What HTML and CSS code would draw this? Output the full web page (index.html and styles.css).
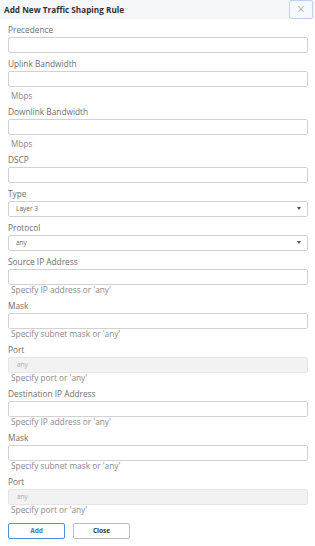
FILE: index.html
```html
<!DOCTYPE html>
<html lang="en">
<head>
    <meta charset="UTF-8">
    <meta name="viewport" content="width=device-width, initial-scale=1.0">
    <title>Add New Traffic Shaping Rule</title>
    <link rel="stylesheet" href="styles.css">
</head>
<body>

    <!-- 標題列 -->
    <div class="modal-header">
        <div class="modal-title">Add New Traffic Shaping Rule</div>
        <button class="close-x" type="button">&times;</button>
    </div>

    <!-- 表單 -->
    <form class="rule-form">
        <div class="field">
            <label class="label">Precedence</label>
            <input class="input" type="text">
        </div>

        <div class="field">
            <label class="label">Uplink Bandwidth</label>
            <input class="input" type="text">
            <div class="unit">Mbps</div>
        </div>

        <div class="field">
            <label class="label">Downlink Bandwidth</label>
            <input class="input" type="text">
            <div class="unit">Mbps</div>
        </div>

        <div class="field">
            <label class="label">DSCP</label>
            <input class="input" type="text">
        </div>

        <div class="field">
            <label class="label">Type</label>
            <div class="select">
                <span>Layer 3</span>
                <span class="caret"></span>
            </div>
        </div>

        <div class="field">
            <label class="label">Protocol</label>
            <div class="select">
                <span>any</span>
                <span class="caret"></span>
            </div>
        </div>

        <div class="field">
            <label class="label">Source IP Address</label>
            <input class="input" type="text">
            <div class="help">Specify IP address or 'any'</div>
        </div>

        <div class="field">
            <label class="label">Mask</label>
            <input class="input" type="text">
            <div class="help">Specify subnet mask or 'any'</div>
        </div>

        <div class="field">
            <label class="label">Port</label>
            <input class="input" type="text" value="any" disabled>
            <div class="help">Specify port or 'any'</div>
        </div>

        <div class="field">
            <label class="label">Destination IP Address</label>
            <input class="input" type="text">
            <div class="help">Specify IP address or 'any'</div>
        </div>

        <div class="field">
            <label class="label">Mask</label>
            <input class="input" type="text">
            <div class="help">Specify subnet mask or 'any'</div>
        </div>

        <div class="field">
            <label class="label">Port</label>
            <input class="input" type="text" value="any" disabled>
            <div class="help">Specify port or 'any'</div>
        </div>

        <!-- 按鈕 -->
        <div class="actions">
            <button class="btn btn-primary" type="button">Add</button>
            <button class="btn" type="button">Close</button>
        </div>
    </form>

</body>
</html>
```

FILE: styles.css
```css
* {
    margin: 0;
    padding: 0;
    box-sizing: border-box;
}

body {
    width: 315px;
    background: #fff;
    color: #666;
    font-family: 'Open Sans', 'Lato', sans-serif;
    font-size: 8.3px;
}

/* 標題列 */
.modal-header {
    height: 19px;
    display: flex;
    align-items: center;
    justify-content: space-between;
    padding-left: 4px;
    padding-right: 2px;
    background: #f5f7fb;
}

.modal-title {
    font-size: 8.2px;
    font-weight: bold;
    color: #333;
}

.close-x {
    width: 24px;
    height: 19px;
    border: 1px solid #bcd4f3;
    border-radius: 2px;
    background: #f7f9fd;
    color: #999;
    font-size: 12px;
    line-height: 15px;
    font-family: 'DejaVu Sans', sans-serif;
    font-weight: 200;
}

/* 表單 */
.rule-form {
    padding: 6px 7px 0 8px;
}

.field {
    display: flex;
    flex-direction: column;
    margin-bottom: 6.5px;
}

.label {
    line-height: 10px;
    margin-bottom: 1.5px;
    color: #6e6e6e;
}

.input {
    height: 16px;
    width: 100%;
    border: 1px solid #d2d2d2;
    border-radius: 2px;
    background: #fff;
    padding: 0 8px;
    font-family: inherit;
    font-size: 6.5px;
    color: #aaa;
}

.input:disabled {
    background: #f2f2f3;
    border-color: #e6e6e8;
}

.select {
    height: 16px;
    display: flex;
    align-items: center;
    justify-content: space-between;
    border: 1px solid #d2d2d2;
    border-radius: 2px;
    padding: 0 6px 0 7px;
    font-size: 6.5px;
    color: #666;
}

.caret {
    width: 0;
    height: 0;
    border-left: 2.5px solid transparent;
    border-right: 2.5px solid transparent;
    border-top: 3px solid #555;
}

.unit {
    line-height: 10px;
    margin-top: 4px;
    padding-left: 3px;
    color: #888;
}

.help {
    line-height: 10px;
    padding-left: 3px;
    color: #888;
}

/* 按鈕 */
.actions {
    display: flex;
    gap: 8px;
    padding-top: 1.5px;
}

.btn {
    width: 57px;
    height: 16px;
    border: 1px solid #bbb;
    border-radius: 2px;
    background: #fff;
    color: #333;
    font-family: inherit;
    font-size: 6.5px;
    font-weight: bold;
}

.btn-primary {
    border-color: #4a90e2;
    color: #2f7ad8;
}
```
